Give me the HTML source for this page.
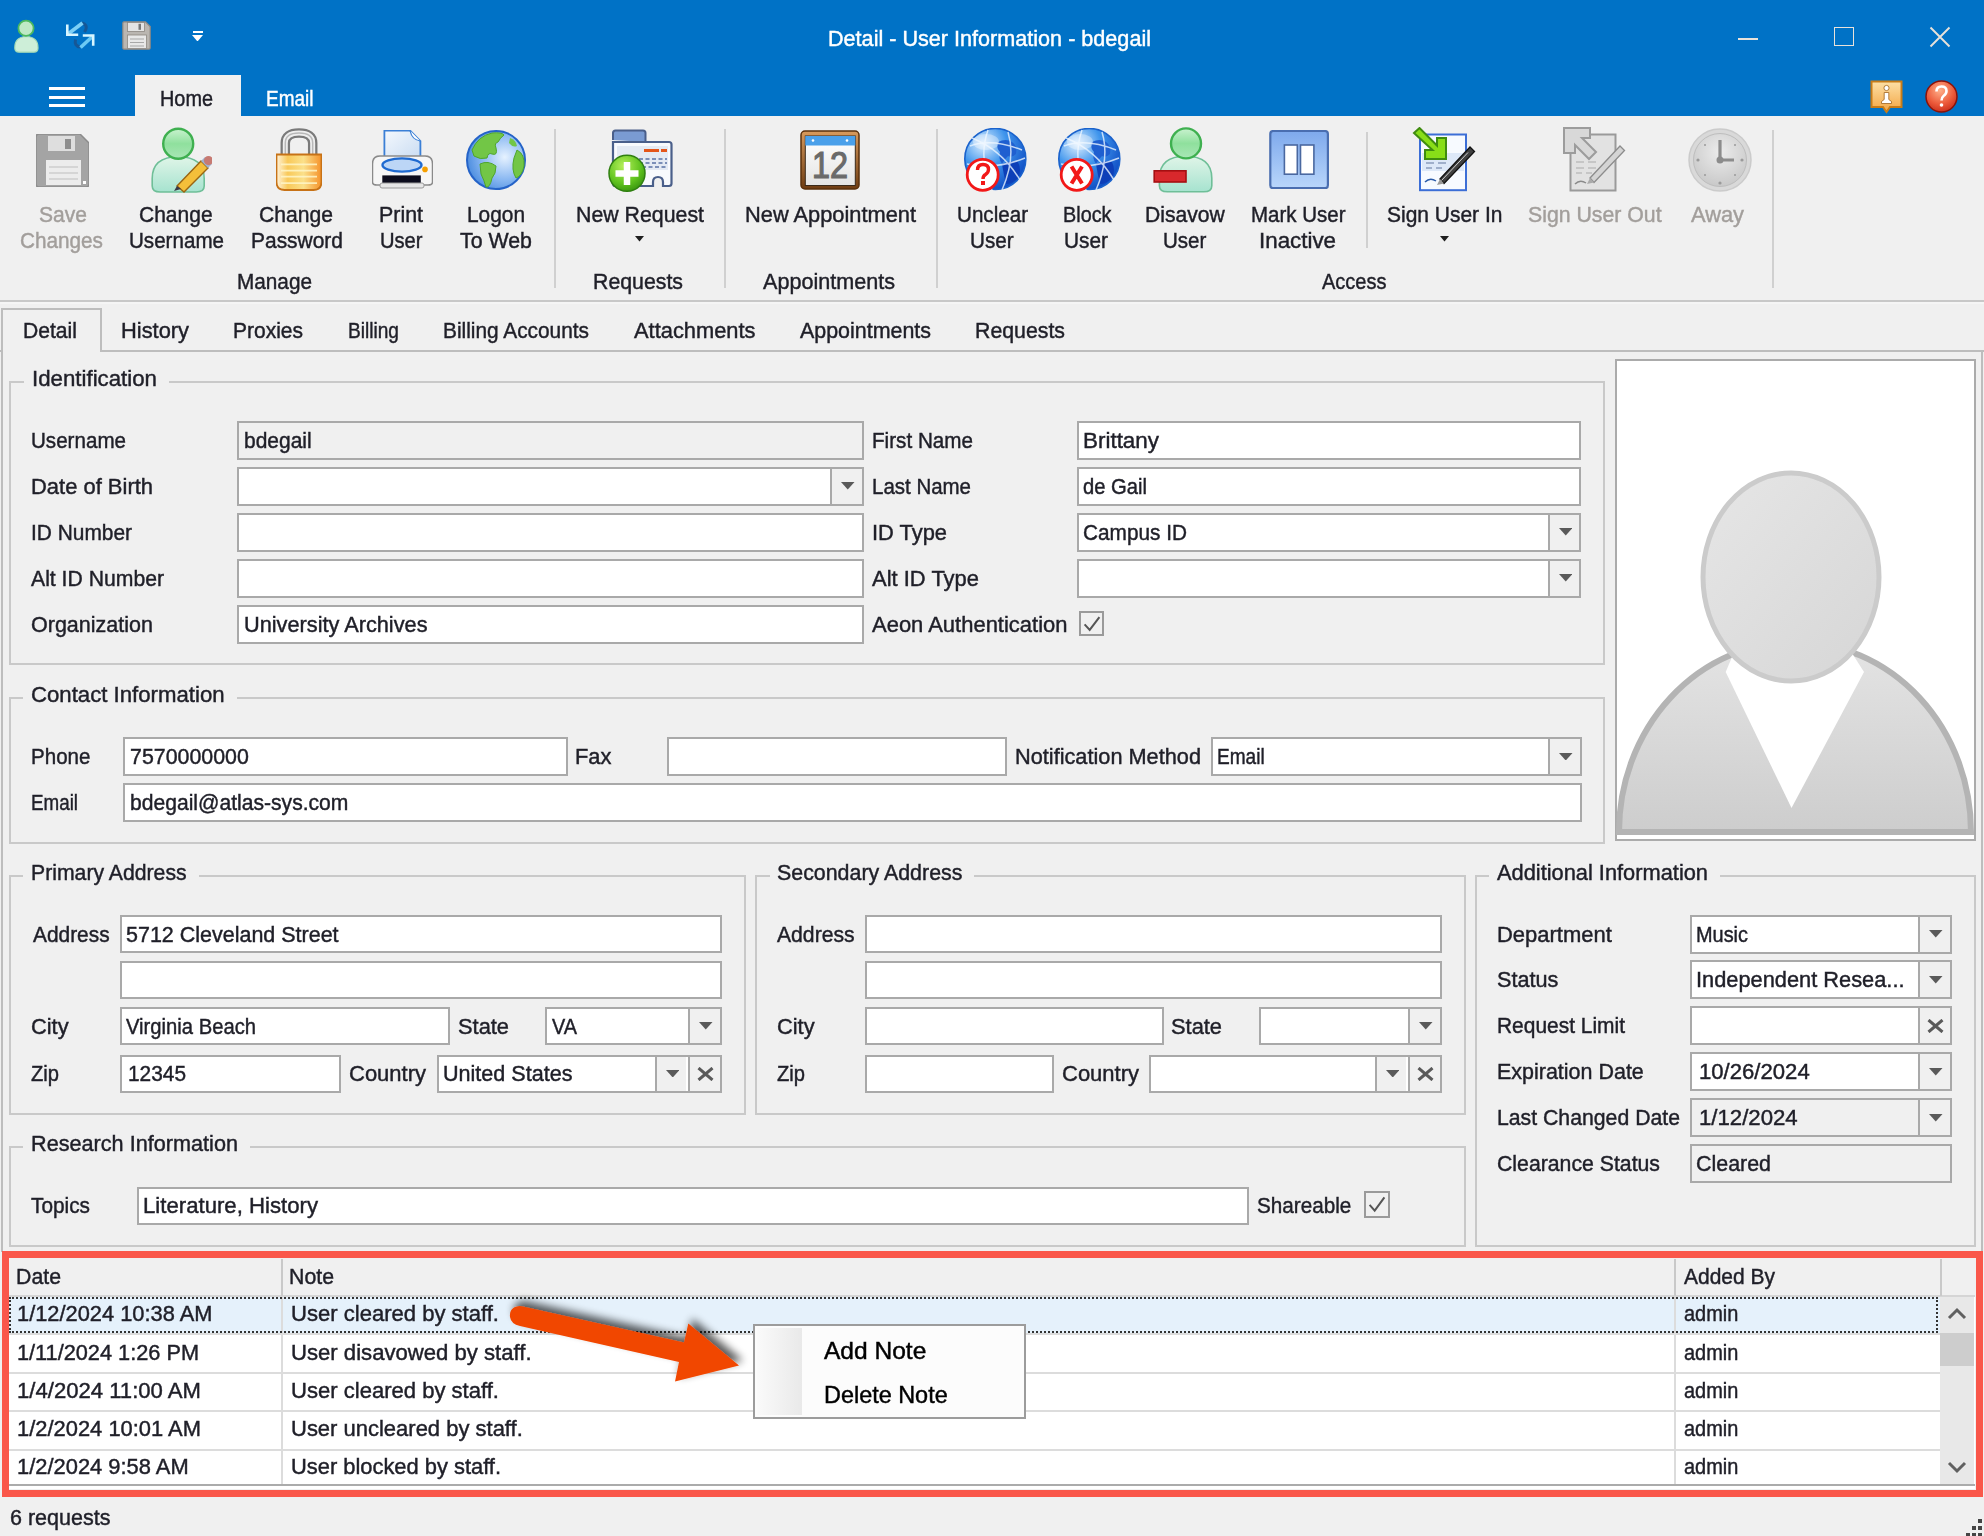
<!DOCTYPE html>
<html><head><meta charset="utf-8"><title>Detail - User Information - bdegail</title>
<style>
html,body{margin:0;padding:0;width:1984px;height:1536px;overflow:hidden;background:#f0f0f0}
body{position:relative;font-family:"Liberation Sans",sans-serif;font-size:22.5px;line-height:22.5px;color:#1f1f28}
.a{position:absolute}
.t{position:absolute;white-space:pre;transform-origin:0 0;-webkit-text-stroke:0.45px currentColor}
</style></head><body>
<div class="a" style="left:0.0px;top:0.0px;width:1984.0px;height:1536.0px;background:#f0f0f0;"></div>
<svg class="a" style="left:0;top:0" width="0" height="0"><defs>
<linearGradient id="gGreen" x1="0" y1="0" x2="0" y2="1"><stop offset="0" stop-color="#c9f2cf"/><stop offset=".5" stop-color="#8fe09d"/><stop offset="1" stop-color="#a9e6b6"/></linearGradient>
<linearGradient id="gBody" x1="0" y1="0" x2="0" y2="1"><stop offset="0" stop-color="#e0f5e8"/><stop offset="1" stop-color="#a6e3cf"/></linearGradient>
<linearGradient id="gLock" x1="0" y1="0" x2="1" y2="0"><stop offset="0" stop-color="#fff3dc"/><stop offset=".25" stop-color="#f9c95a"/><stop offset=".6" stop-color="#fbe08a"/><stop offset="1" stop-color="#f5922a"/></linearGradient>
<radialGradient id="gGlobe" cx=".65" cy=".45" r=".65"><stop offset="0" stop-color="#e6f2ff"/><stop offset=".6" stop-color="#8ab8f2"/><stop offset="1" stop-color="#4f8fe0"/></radialGradient>
<radialGradient id="gGlobe2" cx=".3" cy=".25" r=".85"><stop offset="0" stop-color="#e0f0ff"/><stop offset=".45" stop-color="#3f95ec"/><stop offset="1" stop-color="#0a46c0"/></radialGradient>
<linearGradient id="gPause" x1="0" y1="0" x2="0" y2="1"><stop offset="0" stop-color="#7ea9ec"/><stop offset="1" stop-color="#b9d6fb"/></linearGradient>
<radialGradient id="gClock" cx=".5" cy=".35" r=".7"><stop offset="0" stop-color="#ececec"/><stop offset="1" stop-color="#c6c6c6"/></radialGradient>
<radialGradient id="gPlus" cx=".4" cy=".3" r=".8"><stop offset="0" stop-color="#b5f05a"/><stop offset=".6" stop-color="#5fc21e"/><stop offset="1" stop-color="#2f8a0c"/></radialGradient>
<linearGradient id="gPaper" x1="0" y1="0" x2="1" y2="1"><stop offset="0" stop-color="#f4f8fd"/><stop offset="1" stop-color="#c9dcf2"/></linearGradient>
<linearGradient id="gCal" x1="0" y1="0" x2="0" y2="1"><stop offset="0" stop-color="#d89a5c"/><stop offset="1" stop-color="#6e3c12"/></linearGradient>
<linearGradient id="gFace" x1="0" y1="0" x2="0" y2="1"><stop offset="0" stop-color="#ffffff"/><stop offset="1" stop-color="#e4e4e4"/></linearGradient>
</defs></svg>
<div class="a" style="left:0.0px;top:0.0px;width:1984.0px;height:116.0px;background:#0072c6;"></div>
<div class="a" style="left:134.5px;top:74.5px;width:106.0px;height:41.5px;background:#f0f0f0;"></div>
<div class="t" style="left:828.0px;top:27.6px;color:#ffffff;transform:scaleX(0.9602);">Detail - User Information - bdegail</div>
<div class="t" style="left:160.0px;top:88.1px;transform:scaleX(0.8829);">Home</div>
<div class="t" style="left:265.5px;top:88.1px;color:#ffffff;transform:scaleX(0.8442);">Email</div>
<div class="a" style="left:48.5px;top:87.0px;width:36.0px;height:3.0px;background:#ffffff;"></div>
<div class="a" style="left:48.5px;top:95.5px;width:36.0px;height:3.0px;background:#ffffff;"></div>
<div class="a" style="left:48.5px;top:104.0px;width:36.0px;height:3.0px;background:#ffffff;"></div>
<svg class="a" style="left:12px;top:18px" width="29" height="36" viewBox="0 0 29 36"><path d="M2.8 30Q2.5 19 14.3 18.5Q26.2 19 26 30Q26 34 22 34.2H7Q2.8 34 2.8 30Z" fill="#cdeed8" stroke="#a6dcb6" stroke-width="1.2"/>
<circle cx="14" cy="10.3" r="7.6" fill="#bfe9c6" stroke="#4cb95f" stroke-width="1.8"/></svg>
<svg class="a" style="left:63px;top:20px" width="35" height="33" viewBox="0 0 35 33"><path d="M19 3Q26 5 21.5 12" fill="none" stroke="#1d4f86" stroke-width="3" opacity=".75"/>
<path d="M17 27Q11 26 12.5 19.5" fill="none" stroke="#1d4f86" stroke-width="3" opacity=".75"/>
<path d="M5 14L19.5 3" fill="none" stroke="#7ccff6" stroke-width="3.6"/>
<path d="M4.3 4.5V14.8H15.2" fill="none" stroke="#d8f6ff" stroke-width="2.6"/>
<path d="M30 16L17.5 27.5" fill="none" stroke="#6ccaf4" stroke-width="3.6"/>
<path d="M19.8 15.5H30.2V25.8" fill="none" stroke="#d8f6ff" stroke-width="2.6"/></svg>
<svg class="a" style="left:122px;top:20.5px" width="29" height="29" viewBox="0 0 29 29"><path d="M0.8 2Q0.8 0.8 2 0.8H23.5L28.2 5.5V27Q28.2 28.2 27 28.2H2Q0.8 28.2 0.8 27Z" fill="#bab6b1" stroke="#8d8882" stroke-width="1.2"/>
<rect x="5.5" y="1.5" width="17" height="9" fill="#e4e4e4" stroke="#8d8882" stroke-width=".8"/><rect x="16.5" y="2.8" width="2.5" height="6" fill="#777"/>
<rect x="5.5" y="14" width="19" height="13.5" fill="#e8e8e8" stroke="#8d8882" stroke-width=".8"/>
<path d="M8 18H22M8 21.5H22M8 25H22" stroke="#a8a8a8" stroke-width="1.1"/></svg>
<div class="a" style="left:192.5px;top:30.5px;width:10.0px;height:2.0px;background:#ffffff;"></div>
<svg class="a" style="left:192px;top:34.5px" width="11" height="6.5"><polygon points="0,0 11,0 5.5,6.5" fill="#fff"/></svg>
<div class="a" style="left:1737.8px;top:38.3px;width:20.0px;height:1.8px;background:#e9e2da;"></div>
<div class="a" style="left:1834.0px;top:26.5px;width:20.0px;height:19.8px;box-sizing:border-box;border:1.9px solid #e9e2da;"></div>
<svg class="a" style="left:1929px;top:26px" width="22" height="22"><path d="M1.5 1.5L20.5 20.5M20.5 1.5L1.5 20.5" stroke="#e9e2da" stroke-width="1.9"/></svg>
<svg class="a" style="left:1870px;top:79.5px" width="33" height="36" viewBox="0 0 33 36"><defs><linearGradient id="gInfo" x1="0" y1="0" x2="0" y2="1"><stop offset="0" stop-color="#fde0a6"/><stop offset="1" stop-color="#f3a542"/></linearGradient></defs>
<path d="M1.5 1.5H31.5V27H20L16.5 32L13 27H1.5Z" fill="url(#gInfo)" stroke="#c87c18" stroke-width="2"/>
<circle cx="16.5" cy="8" r="2.6" fill="#ffffff" stroke="#a0621a" stroke-width=".8"/><path d="M14.2 12.5H18.8V19.5L21.5 21.5V23.5H11.5V21.5L14.2 19.5Z" fill="#fff" stroke="#a0621a" stroke-width=".8"/></svg>
<svg class="a" style="left:1924.5px;top:80px" width="33" height="33" viewBox="0 0 33 33"><defs><radialGradient id="gHelp" cx=".45" cy=".3" r=".75"><stop offset="0" stop-color="#ffb08a"/><stop offset=".6" stop-color="#ec5a3a"/><stop offset="1" stop-color="#c62a18"/></radialGradient></defs>
<circle cx="16.5" cy="16.5" r="15.5" fill="url(#gHelp)" stroke="#8a1208" stroke-width="1.5"/>
<path d="M11.5 11.5Q11.5 6.5 16.5 6.5Q21.5 6.5 21.5 11Q21.5 14 18.5 16Q16.5 17.5 16.5 20.5" fill="none" stroke="#fff" stroke-width="2.6"/>
<circle cx="16.5" cy="25" r="1.8" fill="#fff"/></svg>
<div class="a" style="left:0.0px;top:300.0px;width:1984.0px;height:2.0px;background:#c8c8c8;"></div>
<div class="a" style="left:0.0px;top:302.0px;width:1984.0px;height:2.0px;background:#f5f5f5;"></div>
<div class="a" style="left:554.0px;top:128.5px;width:2.0px;height:159.0px;background:#d0d0d0;"></div>
<div class="a" style="left:723.5px;top:128.5px;width:2.0px;height:159.0px;background:#d0d0d0;"></div>
<div class="a" style="left:935.5px;top:128.5px;width:2.0px;height:159.0px;background:#d0d0d0;"></div>
<div class="a" style="left:1365.5px;top:132.0px;width:2.0px;height:116.0px;background:#d0d0d0;"></div>
<div class="a" style="left:1771.5px;top:129.5px;width:2.0px;height:158.5px;background:#d0d0d0;"></div>
<svg class="a" style="left:36px;top:133.5px" width="53" height="53" viewBox="0 0 53 53"><path d="M0 3Q0 0 3 0H44L53 9V50Q53 53 50 53H3Q0 53 0 50Z" fill="#a4a4a4" stroke="#8c8c8c" stroke-width="1.5"/>
<rect x="12" y="2" width="27" height="15" fill="#dedede"/><rect x="29" y="5" width="6" height="10" fill="#8e8e8e"/>
<rect x="10" y="26" width="35" height="25" fill="#ececec"/>
<path d="M13 33H42M13 39H42M13 45H42" stroke="#cdcdcd" stroke-width="1.6"/>
<rect x="47" y="47" width="3" height="3" fill="#fff"/></svg>
<div class="t" style="left:39.0px;top:204.1px;color:#a29e9b;transform:scaleX(0.9357);">Save</div>
<div class="t" style="left:20.0px;top:229.6px;color:#a29e9b;transform:scaleX(0.9214);">Changes</div>
<svg class="a" style="left:150px;top:126px" width="62" height="68" viewBox="0 0 62 68"><path d="M2.2 60V52.624Q2.2 30.8 28.200000000000003 30.8Q54.2 30.8 54.2 52.624V60Q54.2 66 46.2 66H10.2Q2.2 66 2.2 60Z" fill="url(#gBody)" stroke="#6fbf98" stroke-width="1.6"/><circle cx="28.2" cy="17.8" r="15" fill="url(#gGreen)" stroke="#3fb050" stroke-width="2.4"/>
<path d="M27 63L51 38L58 45L34 69Z" transform="translate(0,-3)" fill="#f4bf3a" stroke="#9a6512" stroke-width="1.4"/>
<path d="M27 60L24 65L31 63Z" fill="#3a3a48"/>
<path d="M51 35L55 31L62 38L58 42Z" fill="#9fb2cf"/>
<circle cx="58.5" cy="34.5" r="4.6" fill="#c77a72"/></svg>
<div class="t" style="left:139.0px;top:204.1px;transform:scaleX(0.9337);">Change</div>
<div class="t" style="left:129.0px;top:229.6px;transform:scaleX(0.9152);">Username</div>
<svg class="a" style="left:276px;top:128px" width="46" height="63" viewBox="0 0 46 63"><path d="M9.3 27V15Q9.3 5 23 5Q36.7 5 36.7 15V27" fill="none" stroke="#7a7a7a" stroke-width="9.5"/>
<path d="M9.3 27V15Q9.3 5 23 5Q36.7 5 36.7 15V27" fill="none" stroke="#eeeeee" stroke-width="5"/>
<path d="M9.3 27V15Q9.3 5 23 5Q36.7 5 36.7 15V27" fill="none" stroke="#b8b8b8" stroke-width="1.5"/>
<path d="M0.5 26.5H45.5V54Q45.5 62 37.5 62H8.5Q0.5 62 0.5 54Z" fill="url(#gLock)" stroke="#c77216" stroke-width="1.8"/>
<path d="M5 36.3H41M5 42.7H41M5 48.7H41M5 55.1H41" stroke="#fff6c8" stroke-width="1.8" opacity=".85"/></svg>
<div class="t" style="left:259.0px;top:204.1px;transform:scaleX(0.9388);">Change</div>
<div class="t" style="left:251.0px;top:229.6px;transform:scaleX(0.9312);">Password</div>
<svg class="a" style="left:372px;top:130px" width="61" height="60" viewBox="0 0 61 60"><path d="M12.4 0.5H38L48.4 11V29H12.4Z" fill="url(#gPaper)" stroke="#3a7fd6" stroke-width="1.8"/>
<path d="M38 0.5Q40 10 48.4 11" fill="#ffffff" stroke="#3a7fd6" stroke-width="1.2"/>
<path d="M0.5 34Q0.5 26 8 26H53Q60.5 26 60.5 34V52Q60.5 55 56 55H5Q0.5 55 0.5 52Z" fill="#f6f6f6" stroke="#8a8a8a" stroke-width="1.5"/>
<ellipse cx="30" cy="35" rx="19.5" ry="6.6" fill="#bcd6f6" stroke="#1f6ad0" stroke-width="2.4"/>
<rect x="10.3" y="45.4" width="38.5" height="8" fill="#0c0c1c"/>
<rect x="8" y="53" width="44" height="5" rx="2" fill="#e6e6e6" stroke="#999" stroke-width="1"/>
<circle cx="53" cy="39.4" r="2.8" fill="#f6a000"/></svg>
<div class="t" style="left:379.0px;top:204.1px;transform:scaleX(0.9510);">Print</div>
<div class="t" style="left:379.5px;top:229.6px;transform:scaleX(0.8944);">User</div>
<svg class="a" style="left:466px;top:130px" width="60" height="60" viewBox="0 0 60 60"><circle cx="30" cy="30" r="29" fill="url(#gGlobe)" stroke="#2563c8" stroke-width="2"/>
<path d="M6 20Q12 6 26 3Q36 2 38 5Q34 8 32 12Q28 13 30 18Q32 26 26 24Q22 22 21 28Q14 30 8 26Z" fill="#72c646" stroke="#4fa52c" stroke-width="1"/>
<path d="M14 34Q22 30 30 36Q30 44 26 48Q24 58 20 57Q18 50 15 44Z" fill="#72c646" stroke="#4fa52c" stroke-width="1"/>
<path d="M51 20Q59 24 58 36Q56 46 50 48Q45 40 48 28Z" fill="#72c646" stroke="#4fa52c" stroke-width="1"/>
<path d="M44 8Q50 10 51 16Q47 18 43 13Z" fill="#72c646"/></svg>
<div class="t" style="left:467.0px;top:204.1px;transform:scaleX(0.9268);">Logon</div>
<div class="t" style="left:460.0px;top:229.6px;transform:scaleX(0.9489);">To Web</div>
<div class="t" style="left:237.0px;top:271.1px;transform:scaleX(0.9224);">Manage</div>
<svg class="a" style="left:606px;top:128px" width="68" height="66" viewBox="0 0 68 66"><path d="M7 12V5Q7 2.5 9.5 2.5H37Q39.5 2.5 39.5 5V14" fill="#7a9bd2" stroke="#4a5f8a" stroke-width="2"/>
<path d="M7 14H63Q65.5 14 65.5 16.5V55.5Q65.5 58 63 58H57V54Q57 49 52 49Q47 49 47 54V58H9.5Q7 58 7 55.5Z" fill="#f8fafd" stroke="#4a5f8a" stroke-width="2.2"/>
<rect x="11" y="18" width="51" height="24" fill="#e4eaf3"/>
<path d="M38 22.5H53M55 22.5H61" stroke="#e4561a" stroke-width="3.2"/>
<path d="M33 31H61M33 35H61M36 39H61" stroke="#7b8fb8" stroke-width="2" stroke-dasharray="4 2.5"/>
<circle cx="21" cy="45.3" r="18" fill="url(#gPlus)" stroke="#2f7f10" stroke-width="1.5"/>
<path d="M21 34V57M9.5 45.5H32.5" stroke="#ffffff" stroke-width="6.5"/></svg>
<div class="t" style="left:575.7px;top:204.1px;transform:scaleX(0.9476);">New Request</div>
<svg class="a" style="left:635.0px;top:236.2px" width="9" height="5.5"><polygon points="0,0 9,0 4.5,5.5" fill="#1f1f1f"/></svg>
<div class="t" style="left:593.0px;top:271.1px;transform:scaleX(0.9467);">Requests</div>
<svg class="a" style="left:800px;top:130px" width="60" height="60" viewBox="0 0 60 60"><rect x="1" y="1" width="58" height="58" rx="4" fill="url(#gCal)" stroke="#5a300c" stroke-width="1.5"/>
<rect x="5.3" y="6" width="50" height="49.5" fill="url(#gFace)" stroke="#3a2a1a" stroke-width="1"/>
<rect x="5.3" y="6" width="50" height="9.5" fill="#4aa0ea"/>
<circle cx="13" cy="10.5" r="1.3" fill="#fff"/><circle cx="47" cy="10.5" r="1.3" fill="#fff"/>
<text x="30" y="48" font-family="Liberation Sans" font-size="37" fill="#6a6a6a" stroke="#6a6a6a" stroke-width="1.2" text-anchor="middle" textLength="36" lengthAdjust="spacingAndGlyphs">12</text></svg>
<div class="t" style="left:745.0px;top:204.1px;transform:scaleX(0.9696);">New Appointment</div>
<div class="t" style="left:763.0px;top:271.1px;transform:scaleX(0.9593);">Appointments</div>
<svg class="a" style="left:962px;top:128px" width="66" height="65" viewBox="0 0 66 65"><circle cx="33.3" cy="31" r="30.5" fill="url(#gGlobe2)" stroke="#1a62cc" stroke-width="1.6"/>
<path d="M36 14Q44 10 50 14Q56 18 54 26Q50 30 46 28Q42 32 40 36Q36 30 38 24Q34 20 36 14Z" fill="#1f5fd0"/>
<path d="M40 36Q48 32 56 34Q60 42 56 50Q50 56 44 56Q42 48 40 36Z" fill="#0d3fb8"/>
<path d="M8 18Q30 10 60 22M5 36Q34 42 63 30M26 2Q16 30 30 62M46 4Q54 30 40 62M10 10Q40 22 58 52" fill="none" stroke="#e8f4ff" stroke-width="1.5" opacity=".8"/>
<ellipse cx="24" cy="14" rx="13" ry="8" fill="#ffffff" opacity=".35"/>
<circle cx="20.7" cy="46.8" r="15.5" fill="#ffffff" stroke="#f21818" stroke-width="2.8"/><path d="M15.5 42Q15.5 36.5 21 36.5Q26.5 36.5 26.5 41.5Q26.5 44.5 23.5 46.5Q21 48 21 51" fill="none" stroke="#f21818" stroke-width="3.4"/><rect x="19" y="53" width="4" height="4" fill="#f21818"/></svg>
<div class="t" style="left:956.7px;top:204.1px;transform:scaleX(0.9158);">Unclear</div>
<div class="t" style="left:970.0px;top:229.6px;transform:scaleX(0.9176);">User</div>
<svg class="a" style="left:1056px;top:128px" width="66" height="65" viewBox="0 0 66 65"><circle cx="33.3" cy="31" r="30.5" fill="url(#gGlobe2)" stroke="#1a62cc" stroke-width="1.6"/>
<path d="M36 14Q44 10 50 14Q56 18 54 26Q50 30 46 28Q42 32 40 36Q36 30 38 24Q34 20 36 14Z" fill="#1f5fd0"/>
<path d="M40 36Q48 32 56 34Q60 42 56 50Q50 56 44 56Q42 48 40 36Z" fill="#0d3fb8"/>
<path d="M8 18Q30 10 60 22M5 36Q34 42 63 30M26 2Q16 30 30 62M46 4Q54 30 40 62M10 10Q40 22 58 52" fill="none" stroke="#e8f4ff" stroke-width="1.5" opacity=".8"/>
<ellipse cx="24" cy="14" rx="13" ry="8" fill="#ffffff" opacity=".35"/>
<circle cx="20.7" cy="46.8" r="15.5" fill="#ffffff" stroke="#f21818" stroke-width="2.8"/><path d="M15.5 38.5L26 55.5M26 38.5L15.5 55.5" stroke="#f21818" stroke-width="4"/></svg>
<div class="t" style="left:1062.5px;top:204.1px;transform:scaleX(0.8813);">Block</div>
<div class="t" style="left:1064.0px;top:229.6px;transform:scaleX(0.9260);">User</div>
<svg class="a" style="left:1152px;top:126px" width="62" height="68" viewBox="0 0 62 68"><path d="M7.4 59.8V52.31Q7.4 30.3 33.6 30.3Q59.8 30.3 59.8 52.31V59.8Q59.8 65.8 51.8 65.8H15.4Q7.4 65.8 7.4 59.8Z" fill="url(#gBody)" stroke="#6fbf98" stroke-width="1.6"/><circle cx="34" cy="17.4" r="15" fill="url(#gGreen)" stroke="#3fb050" stroke-width="2.4"/>
<rect x="2.2" y="44.8" width="31.8" height="11.2" fill="#d8282c" stroke="#a50f12" stroke-width="1.6"/></svg>
<div class="t" style="left:1145.0px;top:204.1px;transform:scaleX(0.9385);">Disavow</div>
<div class="t" style="left:1162.6px;top:229.6px;transform:scaleX(0.9134);">User</div>
<svg class="a" style="left:1269px;top:129.5px" width="60" height="59.5" viewBox="0 0 60 59.5"><rect x="1.3" y="1" width="57.6" height="57.2" rx="3" fill="url(#gPause)" stroke="#4a6eb0" stroke-width="2.2"/>
<rect x="15.4" y="15" width="12.9" height="29.2" fill="#ffffff" stroke="#4a68a0" stroke-width="1.6"/>
<rect x="31.5" y="15" width="13.4" height="29.2" fill="#ffffff" stroke="#4a68a0" stroke-width="1.6"/></svg>
<div class="t" style="left:1251.0px;top:204.1px;transform:scaleX(0.9107);">Mark User</div>
<div class="t" style="left:1259.0px;top:229.6px;transform:scaleX(0.9929);">Inactive</div>
<svg class="a" style="left:1412px;top:127px" width="66" height="66" viewBox="0 0 66 66"><rect x="8" y="7.5" width="46" height="55.7" fill="#f7faff" stroke="#3c6ed6" stroke-width="2"/>
<rect x="10" y="26" width="42" height="18" fill="#dde8f8"/>
<path d="M14 30H22M26 30H34M14 36H22M26 36H34M14 41H20M24 41H30" stroke="#8a9cbc" stroke-width="1.6"/>
<path d="M13 55Q18 50 24 54" fill="none" stroke="#2a5aa8" stroke-width="1.5"/>
<path d="M28 52L58 20L62.5 24.5L32 56.5Z" fill="#404040" stroke="#111" stroke-width="1.3"/>
<path d="M29.5 53.5L56 25.5" stroke="#d0d0d0" stroke-width="1"/>
<path d="M28 52L25 58L32 56.5Z" fill="#999"/>
<path d="M2 6L7.5 1L25 18.5V11H34V32H13V23H20.5Z" fill="#88de18" stroke="#3f8c10" stroke-width="2"/></svg>
<div class="t" style="left:1386.6px;top:204.1px;transform:scaleX(0.9321);">Sign User In</div>
<svg class="a" style="left:1440.0px;top:236.2px" width="9" height="5.5"><polygon points="0,0 9,0 4.5,5.5" fill="#1f1f1f"/></svg>
<svg class="a" style="left:1562px;top:126px" width="66" height="66" viewBox="0 0 66 66"><rect x="8.5" y="8.5" width="45" height="56" fill="#e2e2e2" stroke="#9a9a9a" stroke-width="2"/>
<path d="M14 36H22M26 36H34M14 42H22M26 42H34M14 47H20M24 47H30" stroke="#bdbdbd" stroke-width="1.6"/>
<path d="M13 58Q18 53 24 57" fill="none" stroke="#8a8a8a" stroke-width="1.5"/>
<path d="M28 52L58 20L62.5 24.5L32 56.5Z" fill="#d4d4d4" stroke="#8c8c8c" stroke-width="1.3"/>
<path d="M28 52L25 58L32 56.5Z" fill="#aaa"/>
<path d="M2 2H28V12H20L34 26L27 33L13 19V27H2Z" fill="#d8d8d8" stroke="#9c9c9c" stroke-width="2"/></svg>
<div class="t" style="left:1528.0px;top:204.1px;color:#a29e9b;transform:scaleX(0.9454);">Sign User Out</div>
<svg class="a" style="left:1688px;top:128px" width="64" height="64" viewBox="0 0 64 64"><circle cx="32" cy="32" r="31" fill="#d9d9d9" stroke="#cbcbcb" stroke-width="1.5"/>
<circle cx="32" cy="32" r="26.5" fill="url(#gClock)" stroke="#bdbdbd" stroke-width="1"/>
<path d="M32 12V32H46" fill="none" stroke="#8c8c8c" stroke-width="3.2"/>
<circle cx="32" cy="32" r="3.5" fill="#8c8c8c"/>
<g fill="#9a9a9a"><circle cx="32" cy="55" r="1.6"/><circle cx="10" cy="32" r="1.6"/><circle cx="54" cy="32" r="1.6"/><circle cx="17" cy="17" r="1"/><circle cx="47" cy="17" r="1"/><circle cx="17" cy="47" r="1"/><circle cx="47" cy="47" r="1"/></g></svg>
<div class="t" style="left:1691.0px;top:204.1px;color:#a29e9b;transform:scaleX(0.9703);">Away</div>
<div class="t" style="left:1321.5px;top:271.1px;transform:scaleX(0.8893);">Access</div>
<div class="a" style="left:0.0px;top:349.7px;width:1984.0px;height:2.0px;background:#bdbdbd;"></div>
<div class="a" style="left:0.6px;top:349.7px;width:2.0px;height:902.3px;background:#bdbdbd;"></div>
<div class="a" style="left:1981.0px;top:349.7px;width:2.0px;height:902.3px;background:#bdbdbd;"></div>
<div class="a" style="left:0.6px;top:308.3px;width:101.5px;height:43.4px;background:#f0f0f0;box-sizing:border-box;border:2px solid #bdbdbd;"></div>
<div class="a" style="left:2.6px;top:349.0px;width:97.5px;height:4.0px;background:#f0f0f0;"></div>
<div class="t" style="left:23.0px;top:320.1px;transform:scaleX(0.9386);">Detail</div>
<div class="t" style="left:121.0px;top:320.1px;transform:scaleX(0.9712);">History</div>
<div class="t" style="left:233.0px;top:320.1px;transform:scaleX(0.9329);">Proxies</div>
<div class="t" style="left:347.6px;top:320.1px;transform:scaleX(0.8496);">Billing</div>
<div class="t" style="left:442.8px;top:320.1px;transform:scaleX(0.9264);">Billing Accounts</div>
<div class="t" style="left:633.5px;top:320.1px;transform:scaleX(0.9715);">Attachments</div>
<div class="t" style="left:799.5px;top:320.1px;transform:scaleX(0.9521);">Appointments</div>
<div class="t" style="left:974.5px;top:320.1px;transform:scaleX(0.9467);">Requests</div>
<div class="a" style="left:8.5px;top:380.5px;width:1596.5px;height:284.5px;box-sizing:border-box;border:2px solid #c9c9c9;"></div>
<div class="a" style="left:24.0px;top:379.5px;width:145.0px;height:4.0px;background:#f0f0f0;"></div>
<div class="t" style="left:31.8px;top:367.6px;transform:scaleX(0.9894);">Identification</div>
<div class="t" style="left:31.0px;top:429.6px;transform:scaleX(0.9152);">Username</div>
<div class="t" style="left:31.0px;top:475.6px;transform:scaleX(0.9755);">Date of Birth</div>
<div class="t" style="left:31.0px;top:521.6px;transform:scaleX(0.9285);">ID Number</div>
<div class="t" style="left:31.0px;top:567.6px;transform:scaleX(0.9413);">Alt ID Number</div>
<div class="t" style="left:31.0px;top:613.6px;transform:scaleX(0.9563);">Organization</div>
<div class="a" style="left:236.5px;top:420.5px;width:627.0px;height:39.0px;background:#f0f0f0;box-sizing:border-box;border:2px solid #a9a9a9;"></div>
<div class="t" style="left:243.5px;top:429.6px;transform:scaleX(0.9328);">bdegail</div>
<div class="a" style="left:236.5px;top:466.5px;width:627.0px;height:39.0px;background:#fff;box-sizing:border-box;border:2px solid #a9a9a9;"></div>
<div class="a" style="left:830.0px;top:466.5px;width:2.0px;height:39.0px;background:#a9a9a9;"></div>
<div class="a" style="left:832.0px;top:468.5px;width:29.5px;height:35.0px;background:#f0f0f0;"></div>
<svg class="a" style="left:841.0px;top:482.2px" width="13.5" height="7.5"><polygon points="0,0 13.5,0 6.75,7.5" fill="#5a5a5a"/></svg>
<div class="a" style="left:236.5px;top:512.5px;width:627.0px;height:39.0px;background:#fff;box-sizing:border-box;border:2px solid #a9a9a9;"></div>
<div class="a" style="left:236.5px;top:558.5px;width:627.0px;height:39.0px;background:#fff;box-sizing:border-box;border:2px solid #a9a9a9;"></div>
<div class="a" style="left:236.5px;top:604.5px;width:627.0px;height:39.0px;background:#fff;box-sizing:border-box;border:2px solid #a9a9a9;"></div>
<div class="t" style="left:243.5px;top:613.6px;transform:scaleX(0.9655);">University Archives</div>
<div class="t" style="left:871.5px;top:429.6px;transform:scaleX(0.9181);">First Name</div>
<div class="t" style="left:871.5px;top:475.6px;transform:scaleX(0.9098);">Last Name</div>
<div class="t" style="left:871.5px;top:521.6px;transform:scaleX(0.9724);">ID Type</div>
<div class="t" style="left:871.5px;top:567.6px;transform:scaleX(0.9759);">Alt ID Type</div>
<div class="t" style="left:871.5px;top:613.6px;transform:scaleX(0.9767);">Aeon Authentication</div>
<div class="a" style="left:1076.5px;top:420.5px;width:504.5px;height:39.0px;background:#fff;box-sizing:border-box;border:2px solid #a9a9a9;"></div>
<div class="t" style="left:1082.8px;top:429.6px;transform:scaleX(0.9963);">Brittany</div>
<div class="a" style="left:1076.5px;top:466.5px;width:504.5px;height:39.0px;background:#fff;box-sizing:border-box;border:2px solid #a9a9a9;"></div>
<div class="t" style="left:1082.8px;top:475.6px;transform:scaleX(0.8977);">de Gail</div>
<div class="a" style="left:1076.5px;top:512.5px;width:504.5px;height:39.0px;background:#fff;box-sizing:border-box;border:2px solid #a9a9a9;"></div>
<div class="a" style="left:1547.5px;top:512.5px;width:2.0px;height:39.0px;background:#a9a9a9;"></div>
<div class="a" style="left:1549.5px;top:514.5px;width:29.5px;height:35.0px;background:#f0f0f0;"></div>
<svg class="a" style="left:1558.5px;top:528.2px" width="13.5" height="7.5"><polygon points="0,0 13.5,0 6.75,7.5" fill="#5a5a5a"/></svg>
<div class="t" style="left:1082.8px;top:521.6px;transform:scaleX(0.9241);">Campus ID</div>
<div class="a" style="left:1076.5px;top:558.5px;width:504.5px;height:39.0px;background:#fff;box-sizing:border-box;border:2px solid #a9a9a9;"></div>
<div class="a" style="left:1547.5px;top:558.5px;width:2.0px;height:39.0px;background:#a9a9a9;"></div>
<div class="a" style="left:1549.5px;top:560.5px;width:29.5px;height:35.0px;background:#f0f0f0;"></div>
<svg class="a" style="left:1558.5px;top:574.2px" width="13.5" height="7.5"><polygon points="0,0 13.5,0 6.75,7.5" fill="#5a5a5a"/></svg>
<div class="a" style="left:1078.5px;top:610.5px;width:25.5px;height:25.5px;background:#f0f0f0;box-sizing:border-box;border:2px solid #9a9a9a;"></div>
<svg class="a" style="left:1078.5px;top:610.5px" width="26" height="26"><path d="M5.6 13.3L10.7 18.9L20.4 6.1" fill="none" stroke="#555" stroke-width="2"/></svg>
<div class="a" style="left:1614.5px;top:358.5px;width:361.5px;height:482.5px;background:#ffffff;box-sizing:border-box;border:2px solid #ababab;"></div>
<svg class="a" style="left:1614px;top:358px" width="362" height="484">
<defs>
<linearGradient id="sBody" x1="0" y1="0" x2="0" y2="1"><stop offset="0" stop-color="#e4e4e4"/><stop offset="1" stop-color="#cdcdcd"/></linearGradient>
<linearGradient id="sHead" x1="0" y1="0" x2="1" y2="1"><stop offset="0" stop-color="#e6e6e6"/><stop offset="1" stop-color="#d6d6d6"/></linearGradient>
</defs>
<path d="M5 474A176 190 0 0 1 357 474Z" fill="url(#sBody)" stroke="#b4b4b4" stroke-width="6"/>
<path d="M111.7 314L177.5 450L250 314L236 292L121 292Z" fill="#fff"/>
<ellipse cx="177" cy="219" rx="88" ry="104" fill="url(#sHead)" stroke="#cbcbcb" stroke-width="5"/>
</svg>
<div class="a" style="left:9.0px;top:696.5px;width:1596.0px;height:147.0px;box-sizing:border-box;border:2px solid #c9c9c9;"></div>
<div class="a" style="left:23.0px;top:695.5px;width:214.0px;height:4.0px;background:#f0f0f0;"></div>
<div class="t" style="left:31.4px;top:683.6px;transform:scaleX(0.9859);">Contact Information</div>
<div class="t" style="left:31.4px;top:745.8px;transform:scaleX(0.9130);">Phone</div>
<div class="a" style="left:122.5px;top:737.0px;width:445.5px;height:38.5px;background:#fff;box-sizing:border-box;border:2px solid #a9a9a9;"></div>
<div class="t" style="left:130.3px;top:745.8px;transform:scaleX(0.9493);">7570000000</div>
<div class="t" style="left:574.7px;top:745.8px;transform:scaleX(0.9703);">Fax</div>
<div class="a" style="left:666.5px;top:737.0px;width:340.5px;height:38.5px;background:#fff;box-sizing:border-box;border:2px solid #a9a9a9;"></div>
<div class="t" style="left:1014.9px;top:745.8px;transform:scaleX(0.9657);">Notification Method</div>
<div class="a" style="left:1210.5px;top:737.0px;width:371.0px;height:38.5px;background:#fff;box-sizing:border-box;border:2px solid #a9a9a9;"></div>
<div class="a" style="left:1548.0px;top:737.0px;width:2.0px;height:38.5px;background:#a9a9a9;"></div>
<div class="a" style="left:1550.0px;top:739.0px;width:29.5px;height:34.5px;background:#f0f0f0;"></div>
<svg class="a" style="left:1559.0px;top:752.5px" width="13.5" height="7.5"><polygon points="0,0 13.5,0 6.75,7.5" fill="#5a5a5a"/></svg>
<div class="t" style="left:1217.3px;top:745.8px;transform:scaleX(0.8478);">Email</div>
<div class="t" style="left:31.4px;top:791.8px;transform:scaleX(0.8353);">Email</div>
<div class="a" style="left:122.5px;top:783.0px;width:1459.0px;height:38.5px;background:#fff;box-sizing:border-box;border:2px solid #a9a9a9;"></div>
<div class="t" style="left:130.3px;top:791.8px;transform:scaleX(0.9376);">bdegail@atlas-sys.com</div>
<div class="a" style="left:9.0px;top:875.0px;width:736.5px;height:239.5px;box-sizing:border-box;border:2px solid #c9c9c9;"></div>
<div class="a" style="left:23.0px;top:874.0px;width:175.5px;height:4.0px;background:#f0f0f0;"></div>
<div class="t" style="left:31.4px;top:862.1px;transform:scaleX(0.9427);">Primary Address</div>
<div class="t" style="left:32.6px;top:923.6px;transform:scaleX(0.9280);">Address</div>
<div class="a" style="left:119.5px;top:915.0px;width:602.0px;height:38.0px;background:#fff;box-sizing:border-box;border:2px solid #a9a9a9;"></div>
<div class="t" style="left:126.4px;top:923.6px;transform:scaleX(0.9548);">5712 Cleveland Street</div>
<div class="a" style="left:119.5px;top:961.0px;width:602.0px;height:38.0px;background:#fff;box-sizing:border-box;border:2px solid #a9a9a9;"></div>
<div class="t" style="left:31.4px;top:1015.6px;transform:scaleX(0.9703);">City</div>
<div class="a" style="left:119.5px;top:1007.0px;width:330.0px;height:38.0px;background:#fff;box-sizing:border-box;border:2px solid #a9a9a9;"></div>
<div class="t" style="left:126.4px;top:1015.6px;transform:scaleX(0.8985);">Virginia Beach</div>
<div class="t" style="left:457.8px;top:1015.6px;transform:scaleX(0.9706);">State</div>
<div class="a" style="left:544.5px;top:1007.0px;width:177.0px;height:38.0px;background:#fff;box-sizing:border-box;border:2px solid #a9a9a9;"></div>
<div class="a" style="left:688.0px;top:1007.0px;width:2.0px;height:38.0px;background:#a9a9a9;"></div>
<div class="a" style="left:690.0px;top:1009.0px;width:29.5px;height:34.0px;background:#f0f0f0;"></div>
<svg class="a" style="left:699.0px;top:1022.2px" width="13.5" height="7.5"><polygon points="0,0 13.5,0 6.75,7.5" fill="#5a5a5a"/></svg>
<div class="t" style="left:551.7px;top:1015.6px;transform:scaleX(0.8815);">VA</div>
<div class="t" style="left:31.4px;top:1063.1px;transform:scaleX(0.8956);">Zip</div>
<div class="a" style="left:119.5px;top:1054.5px;width:221.5px;height:38.0px;background:#fff;box-sizing:border-box;border:2px solid #a9a9a9;"></div>
<div class="t" style="left:127.6px;top:1063.1px;transform:scaleX(0.9268);">12345</div>
<div class="t" style="left:349.4px;top:1063.1px;transform:scaleX(0.9772);">Country</div>
<div class="a" style="left:436.5px;top:1054.5px;width:285.0px;height:38.0px;background:#fff;box-sizing:border-box;border:2px solid #a9a9a9;"></div>
<div class="a" style="left:688.0px;top:1054.5px;width:2.0px;height:38.0px;background:#a9a9a9;"></div>
<div class="a" style="left:690.0px;top:1056.5px;width:29.5px;height:34.0px;background:#f0f0f0;"></div>
<svg class="a" style="left:697.2px;top:1066.5px" width="17" height="14"><path d="M1.5 1L15.5 13M15.5 1L1.5 13" stroke="#5a5a5a" stroke-width="3"/></svg>
<div class="a" style="left:654.5px;top:1054.5px;width:2.0px;height:38.0px;background:#a9a9a9;"></div>
<div class="a" style="left:656.5px;top:1056.5px;width:29.5px;height:34.0px;background:#f0f0f0;"></div>
<svg class="a" style="left:665.5px;top:1069.8px" width="13.5" height="7.5"><polygon points="0,0 13.5,0 6.75,7.5" fill="#5a5a5a"/></svg>
<div class="t" style="left:443.3px;top:1063.1px;transform:scaleX(0.9587);">United States</div>
<div class="a" style="left:755.0px;top:875.0px;width:710.5px;height:239.5px;box-sizing:border-box;border:2px solid #c9c9c9;"></div>
<div class="a" style="left:770.0px;top:874.0px;width:204.0px;height:4.0px;background:#f0f0f0;"></div>
<div class="t" style="left:777.3px;top:862.1px;transform:scaleX(0.9502);">Secondary Address</div>
<div class="t" style="left:777.3px;top:923.6px;transform:scaleX(0.9401);">Address</div>
<div class="a" style="left:865.0px;top:915.0px;width:576.5px;height:38.0px;background:#fff;box-sizing:border-box;border:2px solid #a9a9a9;"></div>
<div class="a" style="left:865.0px;top:961.0px;width:576.5px;height:38.0px;background:#fff;box-sizing:border-box;border:2px solid #a9a9a9;"></div>
<div class="t" style="left:777.3px;top:1015.6px;transform:scaleX(0.9703);">City</div>
<div class="a" style="left:865.0px;top:1007.0px;width:298.5px;height:38.0px;background:#fff;box-sizing:border-box;border:2px solid #a9a9a9;"></div>
<div class="t" style="left:1170.8px;top:1015.6px;transform:scaleX(0.9706);">State</div>
<div class="a" style="left:1258.5px;top:1007.0px;width:183.0px;height:38.0px;background:#fff;box-sizing:border-box;border:2px solid #a9a9a9;"></div>
<div class="a" style="left:1408.0px;top:1007.0px;width:2.0px;height:38.0px;background:#a9a9a9;"></div>
<div class="a" style="left:1410.0px;top:1009.0px;width:29.5px;height:34.0px;background:#f0f0f0;"></div>
<svg class="a" style="left:1419.0px;top:1022.2px" width="13.5" height="7.5"><polygon points="0,0 13.5,0 6.75,7.5" fill="#5a5a5a"/></svg>
<div class="t" style="left:777.3px;top:1063.1px;transform:scaleX(0.8956);">Zip</div>
<div class="a" style="left:865.0px;top:1054.5px;width:188.5px;height:38.0px;background:#fff;box-sizing:border-box;border:2px solid #a9a9a9;"></div>
<div class="t" style="left:1061.5px;top:1063.1px;transform:scaleX(0.9772);">Country</div>
<div class="a" style="left:1148.5px;top:1054.5px;width:293.0px;height:38.0px;background:#fff;box-sizing:border-box;border:2px solid #a9a9a9;"></div>
<div class="a" style="left:1408.0px;top:1054.5px;width:2.0px;height:38.0px;background:#a9a9a9;"></div>
<div class="a" style="left:1410.0px;top:1056.5px;width:29.5px;height:34.0px;background:#f0f0f0;"></div>
<svg class="a" style="left:1417.2px;top:1066.5px" width="17" height="14"><path d="M1.5 1L15.5 13M15.5 1L1.5 13" stroke="#5a5a5a" stroke-width="3"/></svg>
<div class="a" style="left:1374.5px;top:1054.5px;width:2.0px;height:38.0px;background:#a9a9a9;"></div>
<div class="a" style="left:1376.5px;top:1056.5px;width:29.5px;height:34.0px;background:#f0f0f0;"></div>
<svg class="a" style="left:1385.5px;top:1069.8px" width="13.5" height="7.5"><polygon points="0,0 13.5,0 6.75,7.5" fill="#5a5a5a"/></svg>
<div class="a" style="left:1474.5px;top:874.5px;width:501.0px;height:372.5px;box-sizing:border-box;border:2px solid #c9c9c9;"></div>
<div class="a" style="left:1489.0px;top:873.5px;width:231.0px;height:4.0px;background:#f0f0f0;"></div>
<div class="t" style="left:1497.4px;top:861.6px;transform:scaleX(0.9695);">Additional Information</div>
<div class="t" style="left:1497.4px;top:923.6px;transform:scaleX(0.9765);">Department</div>
<div class="t" style="left:1497.4px;top:969.4px;transform:scaleX(0.9624);">Status</div>
<div class="t" style="left:1497.4px;top:1015.3px;transform:scaleX(0.9305);">Request Limit</div>
<div class="t" style="left:1497.4px;top:1061.3px;transform:scaleX(0.9542);">Expiration Date</div>
<div class="t" style="left:1497.4px;top:1107.3px;transform:scaleX(0.9438);">Last Changed Date</div>
<div class="t" style="left:1497.4px;top:1153.3px;transform:scaleX(0.9443);">Clearance Status</div>
<div class="a" style="left:1690.0px;top:914.5px;width:261.5px;height:39.0px;background:#fff;box-sizing:border-box;border:2px solid #a9a9a9;"></div>
<div class="a" style="left:1918.0px;top:914.5px;width:2.0px;height:39.0px;background:#a9a9a9;"></div>
<div class="a" style="left:1920.0px;top:916.5px;width:29.5px;height:35.0px;background:#f0f0f0;"></div>
<svg class="a" style="left:1929.0px;top:930.2px" width="13.5" height="7.5"><polygon points="0,0 13.5,0 6.75,7.5" fill="#5a5a5a"/></svg>
<div class="t" style="left:1696.0px;top:923.6px;transform:scaleX(0.8849);">Music</div>
<div class="a" style="left:1690.0px;top:960.3px;width:261.5px;height:39.0px;background:#fff;box-sizing:border-box;border:2px solid #a9a9a9;"></div>
<div class="a" style="left:1918.0px;top:960.3px;width:2.0px;height:39.0px;background:#a9a9a9;"></div>
<div class="a" style="left:1920.0px;top:962.3px;width:29.5px;height:35.0px;background:#f0f0f0;"></div>
<svg class="a" style="left:1929.0px;top:976.0px" width="13.5" height="7.5"><polygon points="0,0 13.5,0 6.75,7.5" fill="#5a5a5a"/></svg>
<div class="t" style="left:1696.0px;top:969.4px;transform:scaleX(0.9690);">Independent Resea...</div>
<div class="a" style="left:1690.0px;top:1006.2px;width:261.5px;height:39.0px;background:#fff;box-sizing:border-box;border:2px solid #a9a9a9;"></div>
<div class="a" style="left:1918.0px;top:1006.2px;width:2.0px;height:39.0px;background:#a9a9a9;"></div>
<div class="a" style="left:1920.0px;top:1008.2px;width:29.5px;height:35.0px;background:#f0f0f0;"></div>
<svg class="a" style="left:1927.2px;top:1018.7px" width="17" height="14"><path d="M1.5 1L15.5 13M15.5 1L1.5 13" stroke="#5a5a5a" stroke-width="3"/></svg>
<div class="a" style="left:1690.0px;top:1052.2px;width:261.5px;height:39.0px;background:#fff;box-sizing:border-box;border:2px solid #a9a9a9;"></div>
<div class="a" style="left:1918.0px;top:1052.2px;width:2.0px;height:39.0px;background:#a9a9a9;"></div>
<div class="a" style="left:1920.0px;top:1054.2px;width:29.5px;height:35.0px;background:#f0f0f0;"></div>
<svg class="a" style="left:1929.0px;top:1068.0px" width="13.5" height="7.5"><polygon points="0,0 13.5,0 6.75,7.5" fill="#5a5a5a"/></svg>
<div class="t" style="left:1699.0px;top:1061.3px;transform:scaleX(0.9829);">10/26/2024</div>
<div class="a" style="left:1690.0px;top:1098.2px;width:261.5px;height:39.0px;background:#f0f0f0;box-sizing:border-box;border:2px solid #a9a9a9;"></div>
<div class="a" style="left:1918.0px;top:1098.2px;width:2.0px;height:39.0px;background:#a9a9a9;"></div>
<div class="a" style="left:1920.0px;top:1100.2px;width:29.5px;height:35.0px;background:#f0f0f0;"></div>
<svg class="a" style="left:1929.0px;top:1114.0px" width="13.5" height="7.5"><polygon points="0,0 13.5,0 6.75,7.5" fill="#5a5a5a"/></svg>
<div class="t" style="left:1699.0px;top:1107.3px;transform:scaleX(0.9859);">1/12/2024</div>
<div class="a" style="left:1690.0px;top:1144.2px;width:261.5px;height:39.0px;background:#f0f0f0;box-sizing:border-box;border:2px solid #a9a9a9;"></div>
<div class="t" style="left:1696.0px;top:1153.3px;transform:scaleX(0.9518);">Cleared</div>
<div class="a" style="left:9.0px;top:1146.0px;width:1456.5px;height:100.5px;box-sizing:border-box;border:2px solid #c9c9c9;"></div>
<div class="a" style="left:23.0px;top:1145.0px;width:227.0px;height:4.0px;background:#f0f0f0;"></div>
<div class="t" style="left:31.4px;top:1133.1px;transform:scaleX(0.9623);">Research Information</div>
<div class="t" style="left:31.4px;top:1195.3px;transform:scaleX(0.9250);">Topics</div>
<div class="a" style="left:136.5px;top:1187.0px;width:1112.5px;height:37.5px;background:#fff;box-sizing:border-box;border:2px solid #a9a9a9;"></div>
<div class="t" style="left:143.0px;top:1195.3px;transform:scaleX(0.9856);">Literature, History</div>
<div class="t" style="left:1257.4px;top:1195.3px;transform:scaleX(0.9192);">Shareable</div>
<div class="a" style="left:1364.0px;top:1191.0px;width:25.5px;height:26.5px;background:#f0f0f0;box-sizing:border-box;border:2px solid #9a9a9a;"></div>
<svg class="a" style="left:1364.0px;top:1191.0px" width="26" height="26"><path d="M5.6 13.8L10.7 19.6L20.4 6.4" fill="none" stroke="#555" stroke-width="2"/></svg>
<div class="a" style="left:8.0px;top:1259.0px;width:1967.0px;height:230.0px;background:#ffffff;"></div>
<div class="a" style="left:8.0px;top:1259.0px;width:1967.0px;height:37.0px;background:#f0f0f0;"></div>
<div class="a" style="left:8.0px;top:1294.5px;width:1967.0px;height:2.0px;background:#d5d5d5;"></div>
<div class="a" style="left:280.5px;top:1259.0px;width:2.0px;height:37.0px;background:#c9c9c9;"></div>
<div class="a" style="left:1673.5px;top:1259.0px;width:2.0px;height:37.0px;background:#c9c9c9;"></div>
<div class="a" style="left:1940.0px;top:1259.0px;width:2.0px;height:37.0px;background:#c9c9c9;"></div>
<div class="t" style="left:15.5px;top:1265.6px;transform:scaleX(0.9467);">Date</div>
<div class="t" style="left:289.3px;top:1265.6px;transform:scaleX(0.9467);">Note</div>
<div class="t" style="left:1683.5px;top:1265.6px;transform:scaleX(0.9326);">Added By</div>
<div class="a" style="left:8.0px;top:1297.0px;width:1932.0px;height:37.0px;background:#e5f1fb;"></div>
<div class="a" style="left:8.0px;top:1333.0px;width:1932.0px;height:2.0px;background:#dcdcdc;"></div>
<div class="a" style="left:8.0px;top:1371.5px;width:1932.0px;height:2.0px;background:#dcdcdc;"></div>
<div class="a" style="left:8.0px;top:1410.0px;width:1932.0px;height:2.0px;background:#dcdcdc;"></div>
<div class="a" style="left:8.0px;top:1448.5px;width:1932.0px;height:2.0px;background:#dcdcdc;"></div>
<div class="a" style="left:280.5px;top:1296.5px;width:2.0px;height:187.5px;background:#dcdcdc;"></div>
<div class="a" style="left:1673.5px;top:1296.5px;width:2.0px;height:187.5px;background:#dcdcdc;"></div>
<div class="a" style="left:8.0px;top:1483.7px;width:1967.0px;height:2.0px;background:#ababab;"></div>
<div class="a" style="left:9px;top:1297px;width:1929px;height:36px;box-sizing:border-box;border:2px dotted #333"></div>
<div class="t" style="left:17.2px;top:1303.2px;transform:scaleX(0.9701);">1/12/2024 10:38 AM</div>
<div class="t" style="left:291.2px;top:1303.2px;transform:scaleX(0.9803);">User cleared by staff.</div>
<div class="t" style="left:1683.5px;top:1303.2px;transform:scaleX(0.8875);">admin</div>
<div class="t" style="left:17.2px;top:1341.5px;transform:scaleX(0.9656);">1/11/2024 1:26 PM</div>
<div class="t" style="left:291.2px;top:1341.5px;transform:scaleX(0.9832);">User disavowed by staff.</div>
<div class="t" style="left:1683.5px;top:1341.5px;transform:scaleX(0.8875);">admin</div>
<div class="t" style="left:17.2px;top:1379.8px;transform:scaleX(0.9827);">1/4/2024 11:00 AM</div>
<div class="t" style="left:291.2px;top:1379.8px;transform:scaleX(0.9803);">User cleared by staff.</div>
<div class="t" style="left:1683.5px;top:1379.8px;transform:scaleX(0.8875);">admin</div>
<div class="t" style="left:17.2px;top:1418.1px;transform:scaleX(0.9740);">1/2/2024 10:01 AM</div>
<div class="t" style="left:291.2px;top:1418.1px;transform:scaleX(0.9772);">User uncleared by staff.</div>
<div class="t" style="left:1683.5px;top:1418.1px;transform:scaleX(0.8875);">admin</div>
<div class="t" style="left:17.2px;top:1456.4px;transform:scaleX(0.9734);">1/2/2024 9:58 AM</div>
<div class="t" style="left:291.2px;top:1456.4px;transform:scaleX(0.9725);">User blocked by staff.</div>
<div class="t" style="left:1683.5px;top:1456.4px;transform:scaleX(0.8875);">admin</div>
<div class="a" style="left:1940.0px;top:1296.5px;width:34.0px;height:187.5px;background:#e8e8e8;"></div>
<div class="a" style="left:1940.0px;top:1332.5px;width:34.0px;height:33.5px;background:#cdcdcd;"></div>
<svg class="a" style="left:1947px;top:1307px" width="20" height="14"><path d="M2 11L10 3L18 11" fill="none" stroke="#606060" stroke-width="3"/></svg>
<svg class="a" style="left:1947px;top:1460px" width="20" height="14"><path d="M2 3L10 11L18 3" fill="none" stroke="#606060" stroke-width="3"/></svg>
<div class="a" style="left:1.5px;top:1251.4px;width:1981.0px;height:245.2px;box-sizing:border-box;border:7.2px solid #fa574a;"></div>
<div class="a" style="left:752.5px;top:1324.0px;width:273.0px;height:95.0px;background:#fcfcfc;box-sizing:border-box;border:2px solid #9c9c9c;"></div>
<div class="a" style="left:757px;top:1328px;width:45px;height:87px;background:linear-gradient(90deg,#fafafa,#e9e9e9)"></div>
<div class="t" style="left:824.3px;top:1339.1px;font-size:24px;line-height:24px;color:#000;transform:scaleX(1.0222);">Add Note</div>
<div class="t" style="left:824.3px;top:1383.1px;font-size:24px;line-height:24px;color:#000;transform:scaleX(0.9759);">Delete Note</div>
<svg class="a" style="left:490px;top:1290px" width="280" height="110">
<defs><filter id="sh" x="-20%" y="-40%" width="140%" height="180%"><feGaussianBlur in="SourceAlpha" stdDeviation="4.5"/><feOffset dx="4" dy="-5"/><feComponentTransfer><feFuncA type="linear" slope=".65"/></feComponentTransfer><feMerge><feMergeNode/><feMergeNode in="SourceGraphic"/></feMerge></filter></defs>
<path d="M29.6 16Q19 17 20 27Q21 34 30 36L189 72L185 91.4L249 75.5L198.3 33.6L194 52.5L33 16.5Z" fill="#f14706" filter="url(#sh)"/>
</svg>
<div class="t" style="left:9.6px;top:1506.6px;transform:scaleX(0.9556);">6 requests</div>
<svg class="a" style="left:1958px;top:1515px" width="28" height="26">
<g fill="#454545"><rect x="20" y="4" width="4" height="4"/><rect x="14" y="11" width="4" height="4"/><rect x="20" y="11" width="4" height="4"/><rect x="8" y="18" width="4" height="4"/><rect x="14" y="18" width="4" height="4"/><rect x="20" y="18" width="4" height="4"/></g>
</svg>
</body></html>
